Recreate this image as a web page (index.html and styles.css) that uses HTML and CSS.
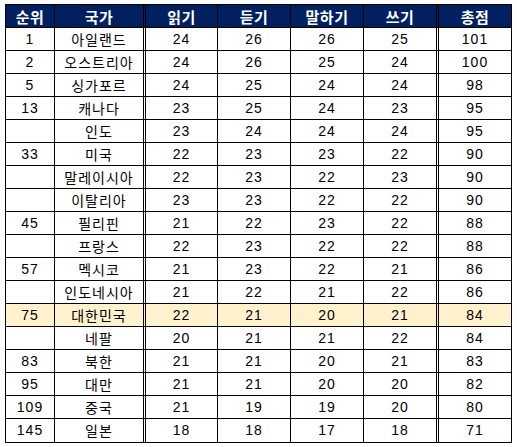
FILE: index.html
```
<!DOCTYPE html>
<html lang="ko">
<head>
<meta charset="utf-8">
<title>국가별 점수</title>
<link rel="stylesheet" href="styles.css">
</head>
<body>
<div class="wrap">
<div class="tbl">
<div class="row head"><div class="c">순위</div><div class="c dbl">국가</div><div class="c">읽기</div><div class="c">듣기</div><div class="c">말하기</div><div class="c dbl">쓰기</div><div class="c">총점</div></div>
<div class="row"><div class="c">1</div><div class="c k dbl">아일랜드</div><div class="c">24</div><div class="c">26</div><div class="c">26</div><div class="c dbl">25</div><div class="c">101</div></div>
<div class="row"><div class="c">2</div><div class="c k dbl">오스트리아</div><div class="c">24</div><div class="c">26</div><div class="c">25</div><div class="c dbl">24</div><div class="c">100</div></div>
<div class="row"><div class="c">5</div><div class="c k dbl">싱가포르</div><div class="c">24</div><div class="c">25</div><div class="c">24</div><div class="c dbl">24</div><div class="c">98</div></div>
<div class="row"><div class="c">13</div><div class="c k dbl">캐나다</div><div class="c">23</div><div class="c">25</div><div class="c">24</div><div class="c dbl">23</div><div class="c">95</div></div>
<div class="row"><div class="c"></div><div class="c k dbl">인도</div><div class="c">23</div><div class="c">24</div><div class="c">24</div><div class="c dbl">24</div><div class="c">95</div></div>
<div class="row"><div class="c">33</div><div class="c k dbl">미국</div><div class="c">22</div><div class="c">23</div><div class="c">23</div><div class="c dbl">22</div><div class="c">90</div></div>
<div class="row"><div class="c"></div><div class="c k dbl">말레이시아</div><div class="c">22</div><div class="c">23</div><div class="c">22</div><div class="c dbl">23</div><div class="c">90</div></div>
<div class="row"><div class="c"></div><div class="c k dbl">이탈리아</div><div class="c">23</div><div class="c">23</div><div class="c">22</div><div class="c dbl">22</div><div class="c">90</div></div>
<div class="row"><div class="c">45</div><div class="c k dbl">필리핀</div><div class="c">21</div><div class="c">22</div><div class="c">23</div><div class="c dbl">22</div><div class="c">88</div></div>
<div class="row"><div class="c"></div><div class="c k dbl">프랑스</div><div class="c">22</div><div class="c">23</div><div class="c">22</div><div class="c dbl">22</div><div class="c">88</div></div>
<div class="row"><div class="c">57</div><div class="c k dbl">멕시코</div><div class="c">21</div><div class="c">23</div><div class="c">22</div><div class="c dbl">21</div><div class="c">86</div></div>
<div class="row"><div class="c"></div><div class="c k dbl">인도네시아</div><div class="c">21</div><div class="c">22</div><div class="c">21</div><div class="c dbl">22</div><div class="c">86</div></div>
<div class="row hl"><div class="c">75</div><div class="c k dbl">대한민국</div><div class="c">22</div><div class="c">21</div><div class="c">20</div><div class="c dbl">21</div><div class="c">84</div></div>
<div class="row"><div class="c"></div><div class="c k dbl">네팔</div><div class="c">20</div><div class="c">21</div><div class="c">21</div><div class="c dbl">22</div><div class="c">84</div></div>
<div class="row"><div class="c">83</div><div class="c k dbl">북한</div><div class="c">21</div><div class="c">21</div><div class="c">20</div><div class="c dbl">21</div><div class="c">83</div></div>
<div class="row"><div class="c">95</div><div class="c k dbl">대만</div><div class="c">21</div><div class="c">21</div><div class="c">20</div><div class="c dbl">20</div><div class="c">82</div></div>
<div class="row"><div class="c">109</div><div class="c k dbl">중국</div><div class="c">21</div><div class="c">19</div><div class="c">19</div><div class="c dbl">20</div><div class="c">80</div></div>
<div class="row last"><div class="c">145</div><div class="c k dbl">일본</div><div class="c">18</div><div class="c">18</div><div class="c">17</div><div class="c dbl">18</div><div class="c">71</div></div>
</div>
</div>
</body>
</html>
```
FILE: styles.css
```
html, body {
  margin: 0;
  padding: 0;
  background: #ffffff;
}
.wrap {
  padding: 4px 0 0 5px;
}
.tbl {
  width: 507px;
  box-sizing: border-box;
  border-left: 1px solid #000;
  border-top: 1px solid #000;
  font-family: "Liberation Sans", "Noto Sans CJK KR", sans-serif;
  font-size: 14px;
  color: #000;
}
.row {
  display: grid;
  grid-template-columns: 49px 91px 72px 73px 73px 75px 73px;
  height: 23px;
}
.row.last {
  height: 24px;
}
.c {
  box-sizing: border-box;
  height: 100%;
  border-right: 1px solid #000;
  border-bottom: 1px solid #000;
  display: flex;
  align-items: center;
  justify-content: center;
  padding-bottom: 1px;
  line-height: 1;
  letter-spacing: 1px;
  white-space: nowrap;
}
.dbl {
  border-right: 3px double #000;
}
.head {
  height: 23px;
  background: #002060;
  color: #ffffff;
  font-family: "Noto Sans CJK KR", sans-serif;
  font-weight: 700;
  font-size: 15px;
}
.head .c {
  letter-spacing: 0.5px;
  padding-bottom: 0;
}
.k {
  font-family: "Noto Sans CJK KR", sans-serif;
  font-size: 14px;
}
.hl {
  background: #fff2cc;
}
```
